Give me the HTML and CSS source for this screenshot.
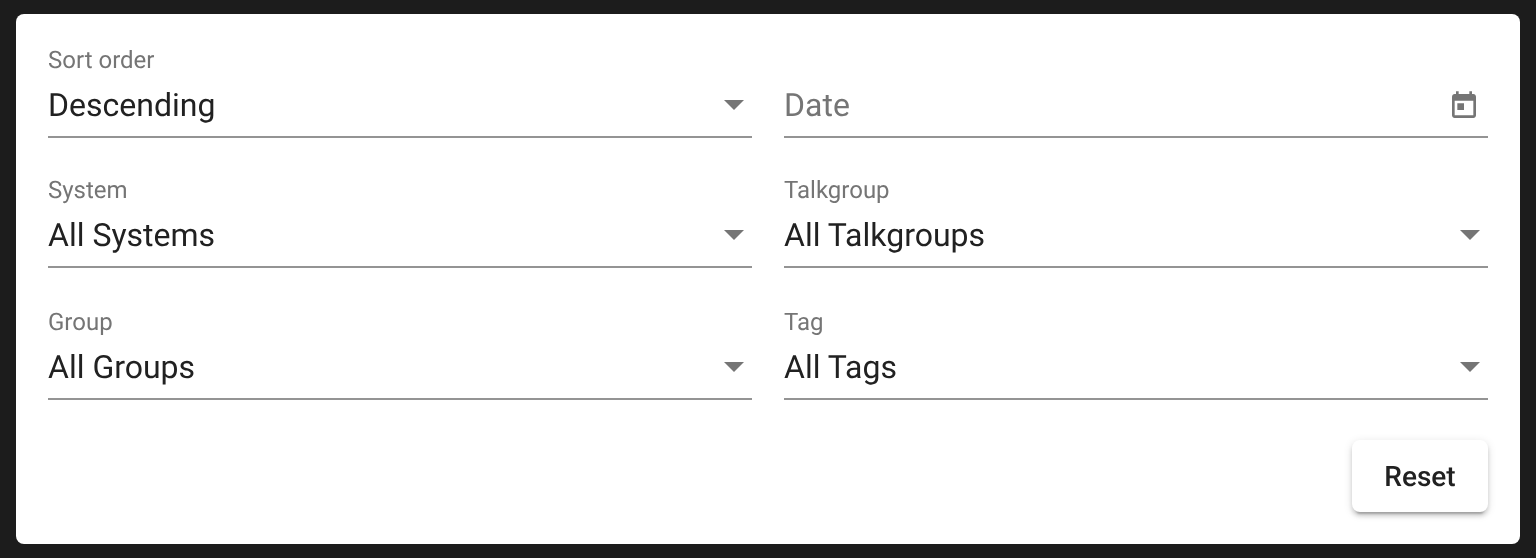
FILE: index.html
```html
<!DOCTYPE html>
<html lang="en">
<head>
    <meta charset="UTF-8">
    <meta name="viewport" content="width=device-width, initial-scale=1.0">
    <title>Search Filters</title>
    <link rel="stylesheet" href="styles.css">
</head>
<body>
    <div class="card">
        <!-- Filters -->
        <div class="field-row first-row">
            <div class="field">
                <span class="field-label">Sort order</span>
                <div class="field-control">
                    <span class="field-value">Descending</span>
                    <span class="select-arrow"></span>
                </div>
            </div>
            <div class="field">
                <span class="field-label"></span>
                <div class="field-control">
                    <span class="field-value placeholder">Date</span>
                    <svg class="calendar-icon" viewBox="0 0 24 24" width="32" height="32">
                        <path fill="#757575" d="M19 3h-1V1h-2v2H8V1H6v2H5c-1.11 0-1.99.9-1.99 2L3 19c0 1.1.89 2 2 2h14c1.1 0 2-.9 2-2V5c0-1.1-.9-2-2-2zm0 16H5V8h14v11zM7 10h5v5H7z"/>
                    </svg>
                </div>
            </div>
        </div>
        <div class="field-row">
            <div class="field">
                <span class="field-label">System</span>
                <div class="field-control">
                    <span class="field-value">All Systems</span>
                    <span class="select-arrow"></span>
                </div>
            </div>
            <div class="field">
                <span class="field-label">Talkgroup</span>
                <div class="field-control">
                    <span class="field-value">All Talkgroups</span>
                    <span class="select-arrow"></span>
                </div>
            </div>
        </div>
        <div class="field-row">
            <div class="field">
                <span class="field-label">Group</span>
                <div class="field-control">
                    <span class="field-value">All Groups</span>
                    <span class="select-arrow"></span>
                </div>
            </div>
            <div class="field">
                <span class="field-label">Tag</span>
                <div class="field-control">
                    <span class="field-value">All Tags</span>
                    <span class="select-arrow"></span>
                </div>
            </div>
        </div>

        <!-- Actions -->
        <div class="actions">
            <button class="reset-button">Reset</button>
        </div>
    </div>
</body>
</html>
```

FILE: styles.css
```css
* {
    margin: 0;
    padding: 0;
    box-sizing: border-box;
    font-family: Roboto, 'Liberation Sans', sans-serif;
    text-rendering: geometricPrecision;
}

body {
    background: #1c1c1c;
    min-height: 100vh;
    padding: 14px 16px;
    overflow: hidden;
}

.card {
    background: #fff;
    border-radius: 8px;
    padding: 32px;
    height: 530px;
    will-change: transform;
}

.field-row {
    display: flex;
    gap: 32px;
    margin-bottom: 40px;
}

.first-row {
    margin-bottom: 38px;
}

.field {
    flex: 1;
    height: 92px;
    display: flex;
    flex-direction: column;
    border-bottom: 2px solid #949494;
}

.field-label {
    height: 28px;
    line-height: 28px;
    font-size: 24px;
    color: #757575;
}

.field-control {
    flex: 1;
    display: flex;
    align-items: center;
    justify-content: space-between;
}

.field-value {
    font-size: 32px;
    color: #212121;
}

.placeholder {
    color: #757575;
}

.select-arrow {
    width: 0;
    height: 0;
    margin-right: 8px;
    border-left: 10px solid transparent;
    border-right: 10px solid transparent;
    border-top: 10px solid #757575;
}

.calendar-icon {
    display: block;
    margin-top: 2px;
    margin-right: 8px;
}

.actions {
    display: flex;
    justify-content: flex-end;
}

.reset-button {
    width: 136px;
    height: 72px;
    background: #fff;
    border: none;
    border-radius: 8px;
    font-size: 28px;
    font-weight: 500;
    color: #212121;
    box-shadow: 0 6px 2px -4px rgba(0, 0, 0, 0.2), 0 4px 4px 0 rgba(0, 0, 0, 0.14), 0 2px 10px 0 rgba(0, 0, 0, 0.12);
}
```
